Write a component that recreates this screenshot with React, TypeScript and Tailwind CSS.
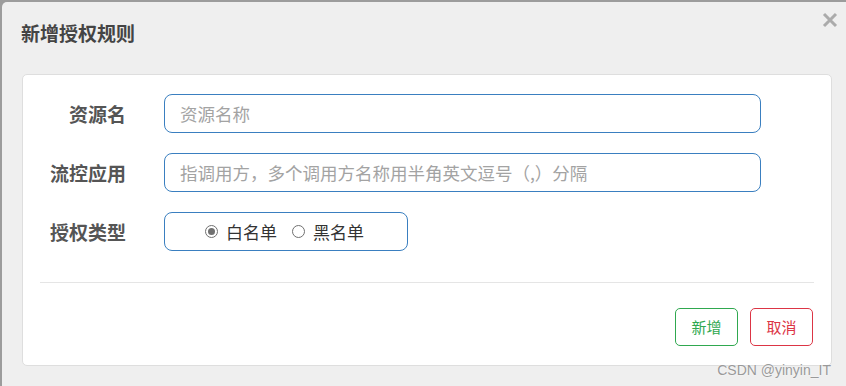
import { useState } from "react";

const cjk = "font-['Microsoft_YaHei','Noto_Sans_CJK_SC',sans-serif]";

function FormRow({ label, children }: { label: string; children: React.ReactNode }) {
  return (
    <div className="flex items-center h-[39px]">
      <div className="w-[86px] text-right text-[19px] font-bold text-[#555] leading-none whitespace-nowrap">{label}</div>
      <div className="ml-[38px] flex-1">{children}</div>
    </div>
  );
}

function Radio({ checked, label, onClick }: { checked: boolean; label: string; onClick: () => void }) {
  return (
    <label onClick={onClick} className="flex items-center cursor-pointer">
      <span className="w-[13px] h-[13px] rounded-full border-[1.5px] border-[#707070] flex items-center justify-center">
        {checked && <span className="w-[7px] h-[7px] rounded-full bg-[#707070]" />}
      </span>
      <span className="ml-[8px] text-[17px] text-[#333] leading-none">{label}</span>
    </label>
  );
}

export default function App() {
  const [mode, setMode] = useState<"white" | "black">("white");

  return (
    <div className={`relative w-[846px] h-[386px] overflow-hidden bg-[#9c9c9c] pl-[2px] pt-[2px] ${cjk}`}>
      <div className="relative h-full w-[850px] bg-[#efefef] rounded-tl-[5px]">
        {/* Header */}
        <div className="h-[72px] flex items-start pl-[19px] pt-[19px]">
          <h3 className="text-[19px] font-bold text-[#444] leading-[24px]">新增授权规则</h3>
        </div>

        {/* Body panel */}
        <div className="ml-[20px] w-[810px] h-[292px] bg-white border border-[#dedede] rounded-[5px] pt-[19px] px-[17px]">
          <div className="flex flex-col gap-[20px] pr-[53px]">
            <FormRow label="资源名">
              <input
                className="w-full h-[39px] border border-[#3a7fc0] rounded-[8px] px-[15px] text-[17.5px] outline-none placeholder:text-[#a3a3a3]"
                placeholder="资源名称"
              />
            </FormRow>
            <FormRow label="流控应用">
              <input
                className="w-full h-[39px] border border-[#3a7fc0] rounded-[8px] px-[15px] text-[17.5px] outline-none placeholder:text-[#a3a3a3]"
                placeholder="指调用方，多个调用方名称用半角英文逗号（,）分隔"
              />
            </FormRow>
            <FormRow label="授权类型">
              <div className="w-[244px] h-[39px] border border-[#3a7fc0] rounded-[8px] flex items-center pl-[40px] gap-[15px]">
                <Radio checked={mode === "white"} label="白名单" onClick={() => setMode("white")} />
                <Radio checked={mode === "black"} label="黑名单" onClick={() => setMode("black")} />
              </div>
            </FormRow>
          </div>

          <div className="mt-[31px] border-t border-[#e5e5e5]" />

          <div className="flex justify-end gap-[12px] mt-[25px] pr-[1px]">
            <button className="w-[63px] h-[38px] border border-[#2fa84f] rounded-[5px] text-[15px] text-[#2fa84f] bg-white">
              新增
            </button>
            <button className="w-[63px] h-[38px] border border-[#dc3545] rounded-[5px] text-[15px] text-[#dc3545] bg-white">
              取消
            </button>
          </div>
        </div>
      </div>

      {/* close button */}
      <button className="absolute left-[822px] top-[12px] w-[16px] h-[16px]">
        <svg viewBox="0 0 16 16" width="16" height="16">
          <path d="M2 2L14 14M14 2L2 14" stroke="#ababab" strokeWidth="3" strokeLinecap="butt" />
        </svg>
      </button>

      {/* watermark */}
      <div className="absolute right-[15px] top-[360px] text-[14px] text-[#9a9a9a] font-['Liberation_Sans',sans-serif] [text-shadow:0_0_2px_#fff]">
        CSDN @yinyin_IT
      </div>
    </div>
  );
}
